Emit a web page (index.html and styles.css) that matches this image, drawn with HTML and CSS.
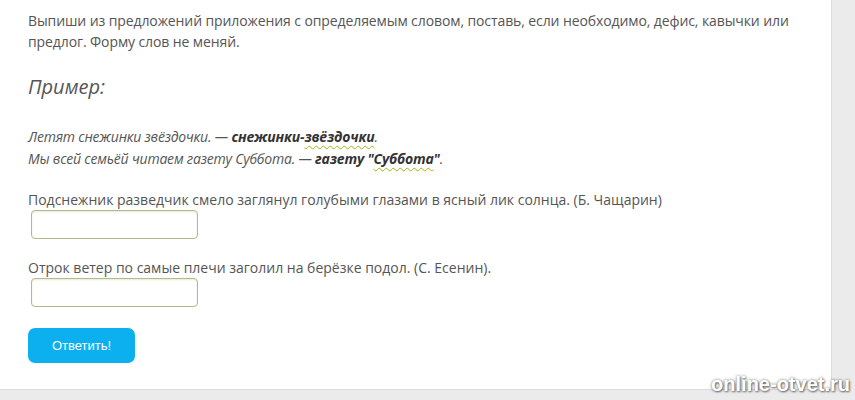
FILE: index.html
```html
<!DOCTYPE html>
<html lang="ru">
<head>
<meta charset="utf-8">
<title>Задание</title>
<link rel="stylesheet" href="styles.css">
</head>
<body>
<div class="page">
  <div class="card">
    <p class="task">Выпиши из предложений приложения с определяемым словом, поставь, если необходимо, дефис, кавычки или предлог. Форму слов не меняй.</p>
    <h3 class="example-title">Пример:</h3>
    <p class="example">
      Летят снежинки звёздочки. — <b>снежинки-<span class="wavy">звёздочки</span></b>.<br>
      Мы всей семьёй читаем газету Суббота. — <b>газету "<span class="wavy">Суббота</span>"</b>.
    </p>
    <div class="question">
      <p class="q-text">Подснежник разведчик смело заглянул голубыми глазами в ясный лик солнца. (Б. Чащарин)</p>
      <input class="answer" type="text">
    </div>
    <div class="question">
      <p class="q-text">Отрок ветер по самые плечи заголил на берёзке подол. (С. Есенин).</p>
      <input class="answer" type="text">
    </div>
    <button class="submit" type="button">Ответить!</button>
  </div>
  <div class="side"></div>
</div>
<div class="footer"></div>
<div class="mark">online-otvet.ru</div>
</body>
</html>
```

FILE: styles.css
```css
html, body {
  margin: 0;
  padding: 0;
  background: #ebebeb;
}

body {
  width: 855px;
  height: 400px;
  overflow: hidden;
  position: relative;
  font-family: "Open Sans", "Noto Sans", sans-serif;
  color: #555;
}

.page {
  display: flex;
  height: 390px;
}

.card {
  width: 832px;
  background: #fff;
  border-right: 1px solid #dcdcdc;
  border-bottom: 1px solid #dcdcdc;
  padding: 4px 0 0 28px;
  box-sizing: border-box;
}

.side {
  flex: 1;
  background: #ebebeb;
}

.task {
  margin: 6px 0 0;
  font-size: 14px;
  line-height: 21px;
  letter-spacing: -0.1px;
}

.example-title {
  margin: 22px 0 0;
  font-size: 20px;
  line-height: 26px;
  font-weight: normal;
  font-style: italic;
  color: #555;
}

.example {
  margin: 26px 0 0;
  font-size: 14px;
  line-height: 22px;
  font-style: italic;
  letter-spacing: -0.2px;
}

.example b {
  color: #333;
  font-weight: bold;
}

.wavy {
  text-decoration: underline wavy #9fb80f;
  text-decoration-thickness: 1px;
  text-underline-offset: 3px;
}

.question {
  margin-top: 19px;
}

.q-text {
  margin: 0;
  font-size: 14px;
  line-height: 21px;
}

.answer {
  display: block;
  margin: 0 0 0 3px;
  width: 167px;
  height: 29px;
  box-sizing: border-box;
  border: 1px solid #b4b98a;
  border-radius: 4px;
  box-shadow: inset 0 1px 2px rgba(160, 170, 110, 0.25);
  background: #fff;
  outline: none;
}

.question + .question {
  margin-top: 18px;
}

.submit {
  margin-top: 21px;
  width: 107px;
  height: 35px;
  border: none;
  border-radius: 7px;
  background: #0cb0ef;
  color: #fff;
  font-family: "Liberation Sans", Arial, sans-serif;
  font-size: 13px;
  cursor: pointer;
}

.footer {
  height: 10px;
  background: #ebebeb;
}

.mark {
  position: absolute;
  right: 5px;
  bottom: 4px;
  font-family: "Liberation Sans", Arial, sans-serif;
  font-weight: bold;
  font-size: 20px;
  color: #fff;
  text-shadow: 0 0 3px rgba(0, 0, 0, 0.55), 1px 1px 2px rgba(0, 0, 0, 0.45);
}
```
